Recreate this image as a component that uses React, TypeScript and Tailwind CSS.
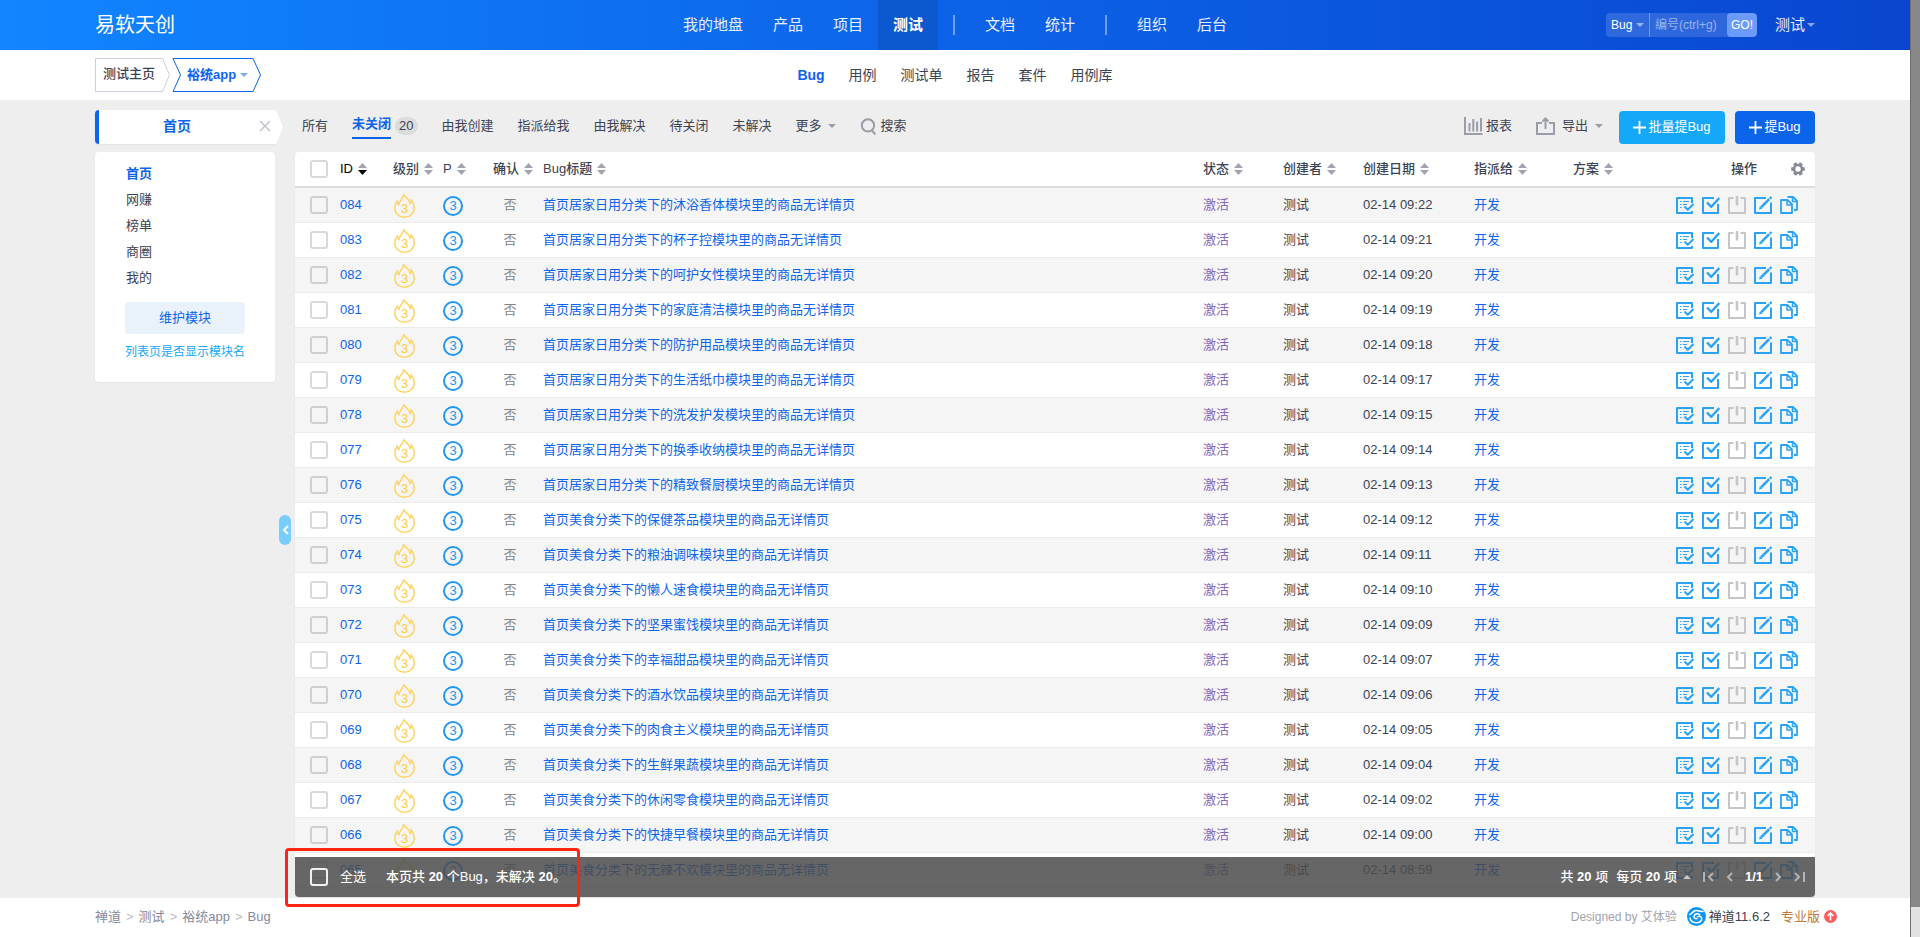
import type {ReactNode} from 'react';

const FONT = 'font-["Liberation_Sans","Noto_Sans_CJK_SC",sans-serif]';

const mainNav = [['我的地盘', '产品', '项目', '测试'], ['文档', '统计'], ['组织', '后台']];
const subNav = ['Bug', '用例', '测试单', '报告', '套件', '用例库'];
const modules = ['首页', '网赚', '榜单', '商圈', '我的'];
const filters = ['由我创建', '指派给我', '由我解决', '待关闭', '未解决'];

const bugs = [
    {id: '084', name: '居家日用分类下的沐浴香体', time: '09:22'},
    {id: '083', name: '居家日用分类下的杯子控', time: '09:21'},
    {id: '082', name: '居家日用分类下的呵护女性', time: '09:20'},
    {id: '081', name: '居家日用分类下的家庭清洁', time: '09:19'},
    {id: '080', name: '居家日用分类下的防护用品', time: '09:18'},
    {id: '079', name: '居家日用分类下的生活纸巾', time: '09:17'},
    {id: '078', name: '居家日用分类下的洗发护发', time: '09:15'},
    {id: '077', name: '居家日用分类下的换季收纳', time: '09:14'},
    {id: '076', name: '居家日用分类下的精致餐厨', time: '09:13'},
    {id: '075', name: '美食分类下的保健茶品', time: '09:12'},
    {id: '074', name: '美食分类下的粮油调味', time: '09:11'},
    {id: '073', name: '美食分类下的懒人速食', time: '09:10'},
    {id: '072', name: '美食分类下的坚果蜜饯', time: '09:09'},
    {id: '071', name: '美食分类下的幸福甜品', time: '09:07'},
    {id: '070', name: '美食分类下的酒水饮品', time: '09:06'},
    {id: '069', name: '美食分类下的肉食主义', time: '09:05'},
    {id: '068', name: '美食分类下的生鲜果蔬', time: '09:04'},
    {id: '067', name: '美食分类下的休闲零食', time: '09:02'},
    {id: '066', name: '美食分类下的快捷早餐', time: '09:00'},
    {id: '065', name: '美食分类下的无辣不欢', time: '08:59'},
];

function Caret({className = 'text-[#9a9ca8]', up = false}: {className?: string; up?: boolean}) {
    return (
        <svg className={`h-1 w-2 shrink-0 ${className}`} viewBox="0 0 8 4" fill="currentColor" aria-hidden="true">
            <path d={up ? 'M0 4 4 0l4 4z' : 'M0 0h8L4 4z'}/>
        </svg>
    );
}

function SortIcon({active = false}: {active?: boolean}) {
    return (
        <svg className="h-3 w-[9px] shrink-0" viewBox="0 0 9 12" aria-hidden="true">
            <path d="M0 5 4.5 0 9 5z" fill="#a1a3ae"/>
            <path d="M0 7h9l-4.5 5z" fill={active ? '#000' : '#a1a3ae'}/>
        </svg>
    );
}

function Checkbox({label, className = 'border-black/15'}: {label: string; className?: string}) {
    return (
        <input
            type="checkbox"
            aria-label={label}
            className={`size-[18px] shrink-0 appearance-none rounded-[3px] border-2 ${className}`}
        />
    );
}

function Flame() {
    return (
        <svg className="col-start-1 row-start-1 h-6 w-[21px]" viewBox="0 0 21 24" fill="none" stroke="#ffd35c" strokeWidth="1.400" aria-hidden="true">
            <path d="M9.6.8C9.6 4 5.4 6.400 4.900 10.600 4 10 3.400 8.800 3.400 7 1.500 9 .8 11.500.8 14c0 5.500 4.300 9.300 9.700 9.300s9.700-3.800 9.700-9.300c0-3-1-5.600-2.900-8 0 1.400-.2 2.500-1.100 3.600C15.700 5.400 12.300 4 9.600.8z"/>
        </svg>
    );
}

function ActionIcon({children, label, disabled = false}: {children: ReactNode; label: string; disabled?: boolean}) {
    return (
        <button type="button" aria-label={label} disabled={disabled} className={disabled ? 'text-[#c6c6c6]' : 'text-[#2aa3f7]'}>
            <svg className="size-[18px]" viewBox="0 0 18 18" fill="none" stroke="currentColor" strokeWidth="2" strokeLinejoin="round" aria-hidden="true">
                {children}
            </svg>
        </button>
    );
}

function RowActions() {
    return (
        <div className="flex items-center justify-end gap-2 pr-[17px]">
            <ActionIcon label="确认">
                <path d="M16 7V2H1v15h15v-2"/>
                <path d="M4 5.500h1.500M7 5.500h6M4 8.500h1.500M7 8.500h4M4 11.500h1.500" strokeWidth="1.200"/>
                <path d="m8.500 10.500 3.200 3.200 5.800-5.700" strokeWidth="2"/>
            </ActionIcon>
            <ActionIcon label="解决">
                <path d="M12 2H1v15h15V8"/>
                <path d="m5 6.500 4.300 4.300L17.300 2" strokeWidth="2.400"/>
            </ActionIcon>
            <ActionIcon label="关闭" disabled>
                <path d="M5.500 2H1v15h16V2h-4.500"/>
                <path d="M9 0v9.500" strokeWidth="2.600"/>
            </ActionIcon>
            <ActionIcon label="编辑">
                <path d="M12 2H1v15h16V6.500"/>
                <path d="m7.300 11.200 7.900-8" strokeWidth="2.600"/>
                <path d="m15.800 2.700 1.700-1.700" strokeWidth="2.400"/>
                <path d="M5 13.500 6 10l2.500 2.500z" fill="currentColor" stroke="none"/>
            </ActionIcon>
            <ActionIcon label="复制">
                <path d="M1 4h6.500L12 8.500V17H1z" strokeWidth="1.800"/>
                <path d="M7 4.500V9h4.500" strokeWidth="1.500"/>
                <path d="M7.500 1H13l4 4v9h-3" strokeWidth="1.800"/>
                <path d="M12.500 1.500v4H17" strokeWidth="1.500"/>
            </ActionIcon>
        </div>
    );
}

function Header() {
    return (
        <header className="grid h-[50px] grid-cols-[1fr_auto_1fr] items-center bg-linear-to-r from-[#1285ff] via-[#0d63e8] to-[#0a46d0] px-[95px] text-[15px] text-white">
            <h1 className="text-xl">易软天创</h1>
            <nav className="flex h-full items-center">
                {mainNav.map((group, index) => (
                    <div key={group[0]} className="flex h-full items-center">
                        {index > 0 && <span className="mx-[15px] h-5 w-0.5 bg-white/40"/>}
                        {group.map((item) => (
                            <a
                                key={item}
                                href="#"
                                className={`flex h-full items-center px-[15px] ${item === '测试' ? 'bg-[#0c59cf] font-bold' : 'text-white/90'}`}
                            >
                                {item}
                            </a>
                        ))}
                    </div>
                ))}
            </nav>
            <div className="flex items-center justify-end">
                <form className="flex h-6 overflow-hidden rounded-sm bg-white/15 text-xs">
                    <button type="button" className="flex w-11 items-center justify-between border-r border-white/30 px-[5px] font-medium">
                        Bug
                        <Caret className="text-white/50"/>
                    </button>
                    <input
                        aria-label="编号"
                        placeholder="编号(ctrl+g)"
                        className="w-[77px] bg-transparent px-[5px] placeholder:text-white/50"
                    />
                    <button type="button" className="w-[30px] rounded-sm bg-[#6b9bff]">GO!</button>
                </form>
                <a href="#" className="ml-[18px] flex items-center gap-0.5 text-white/90">
                    测试
                    <Caret className="text-white/50"/>
                </a>
            </div>
        </header>
    );
}

function SubHeader() {
    return (
        <div className="grid h-[50px] grid-cols-[1fr_auto_1fr] items-center bg-white px-[95px]">
            <div className="flex text-[13px] font-medium">
                <a href="#" className="relative h-[34px] w-[75px] pl-2 leading-[32px]">
                    <svg className="absolute inset-0 h-full w-full" viewBox="0 0 75 34" fill="none" stroke="#cbcfdc" aria-hidden="true">
                        <path d="M67.500.5H.5v33h67L74.500 17z"/>
                    </svg>
                    <span className="relative">测试主页</span>
                </a>
                <a href="#" className="relative ml-0.5 flex h-[34px] w-[89px] items-center gap-1 pl-[15px] font-bold text-[#0c64eb]">
                    <svg className="absolute inset-0 h-full w-full" viewBox="0 0 89 34" fill="none" stroke="currentColor" aria-hidden="true">
                        <path d="M1 .5h80L88.500 17 81 33.500H1L8.500 17z"/>
                    </svg>
                    <span className="relative">裕统app</span>
                    <Caret className="text-[#7eaaf5]"/>
                </a>
            </div>
            <nav className="flex text-sm">
                {subNav.map((item) => (
                    <a key={item} href="#" className={`px-3 ${item === 'Bug' ? 'font-bold text-[#0c64eb]' : ''}`}>{item}</a>
                ))}
            </nav>
        </div>
    );
}

function Sidebar() {
    return (
        <aside className="relative w-[200px] shrink-0 pr-5">
            <div className="relative flex h-[34px] items-center justify-center rounded-l border-l-4 border-[#0c64eb] bg-white pr-5 pb-0.5 text-sm font-bold text-[#0c64eb] shadow-xs">
                首页
                <button type="button" aria-label="关闭" className="absolute right-0 p-1 text-[#c4c5cc]">
                    <svg className="size-3" viewBox="0 0 12 12" stroke="currentColor" strokeWidth="1.500" aria-hidden="true">
                        <path d="m1 1 10 10M11 1 1 11"/>
                    </svg>
                </button>
                <svg className="absolute top-0 left-full h-[34px] w-2" viewBox="0 0 8 34" fill="#fff" aria-hidden="true">
                    <path d="M0 0h1l7 17-7 17H0z"/>
                </svg>
            </div>
            <div className="mt-2 rounded bg-white px-[30px] pt-[9px] pb-5 text-[13px] shadow-xs">
                <ul className="pl-px leading-[26px]">
                    {modules.map((item) => (
                        <li key={item}>
                            <a href="#" className={item === '首页' ? 'font-bold text-[#0c64eb]' : ''}>{item}</a>
                        </li>
                    ))}
                </ul>
                <button type="button" className="mt-[11px] h-8 w-full rounded bg-[#e9f2fb] text-[#0c64eb]">维护模块</button>
                <a href="#" className="mt-2 block text-center text-xs leading-5 whitespace-nowrap text-[#16a8f8]">列表页是否显示模块名</a>
            </div>
            <button type="button" aria-label="收起" className="absolute top-[405px] right-1 grid h-[30px] w-3 place-items-center rounded-full bg-[#79cdfb] text-white">
                <svg className="h-2.5 w-[7px]" viewBox="0 0 7 10" fill="none" stroke="currentColor" strokeWidth="2" aria-hidden="true">
                    <path d="M6 1 2 5l4 4"/>
                </svg>
            </button>
        </aside>
    );
}

function Toolbar() {
    return (
        <div className="-ml-[5px] flex h-[34px] items-center text-[13px]">
            <div className="flex h-full items-center pb-0.5">
                <a href="#" className="px-3">所有</a>
                <a href="#" className="flex items-center gap-1 px-3 font-bold text-[#0c64eb]">
                    <span className="border-b-2 border-[#0c64eb] pb-0.5 leading-[22px]">未关闭</span>
                    <span className="rounded-full bg-[#dddddd] px-1 text-[13px] leading-[18px] font-normal text-[#3c4353]">20</span>
                </a>
                {filters.map((item) => (
                    <a key={item} href="#" className="px-3">{item}</a>
                ))}
                <button type="button" className="flex items-center gap-1.5 px-3">
                    更多
                    <Caret/>
                </button>
                <button type="button" className="flex items-center gap-1 px-3">
                    <svg className="size-[17px]" viewBox="0 0 16 16" fill="none" stroke="#9a9ca8" strokeWidth="1.900" aria-hidden="true">
                        <circle cx="7.500" cy="7" r="5.800"/>
                        <path d="m11 11.500 3.500 4"/>
                    </svg>
                    搜索
                </button>
            </div>
            <div className="ml-auto flex items-center">
                <div className="flex items-center pb-0.5">
                    <button type="button" className="flex items-center gap-[3px] px-3">
                        <svg className="h-[18px] w-[19px]" viewBox="0 0 19 18" fill="none" stroke="#9a9ca8" strokeWidth="2" aria-hidden="true">
                            <path d="M1 0v17h17.500M5.500 6v8.500M9.300 2v12.500M13.100 4.500v10M17 1v13.500"/>
                        </svg>
                        报表
                    </button>
                    <button type="button" className="flex items-center gap-[7px] px-3">
                        <svg className="h-[18px] w-[19px]" viewBox="0 0 19 18" fill="none" stroke="#9a9ca8" strokeWidth="2" aria-hidden="true">
                            <path d="M6 6H1v11h17V6h-5M9.500 12V2M6.500 4.500l3-3 3 3"/>
                        </svg>
                        导出
                        <Caret/>
                    </button>
                </div>
                <button type="button" className="ml-1 flex h-[33px] w-[106px] items-center justify-center gap-0.5 rounded bg-[#16a8f8] text-white">
                    <Plus/>
                    批量提Bug
                </button>
                <button type="button" className="ml-2.5 flex h-[33px] w-20 items-center justify-center gap-0.5 rounded bg-[#0c64eb] text-white">
                    <Plus/>
                    提Bug
                </button>
            </div>
        </div>
    );
}

function Plus() {
    return (
        <svg className="size-[13px]" viewBox="0 0 13 13" stroke="currentColor" strokeWidth="1.800" aria-hidden="true">
            <path d="M6.500 0v13M0 6.500h13"/>
        </svg>
    );
}

function HeadCell({children, className = 'pl-2', active = false}: {children: ReactNode; className?: string; active?: boolean}) {
    return (
        <th className={`text-left font-medium ${active ? 'text-black' : ''} ${className}`}>
            <div className="flex items-center gap-[5px]">
                {children}
                <SortIcon active={active}/>
            </div>
        </th>
    );
}

function BugTable() {
    return (
        <table className="w-full table-fixed border-collapse whitespace-nowrap">
            <colgroup>
                <col className="w-[90px]"/>
                <col className="w-[50px]"/>
                <col className="w-[50px]"/>
                <col className="w-[50px]"/>
                <col/>
                <col className="w-20"/>
                <col className="w-20"/>
                <col className="w-[111px]"/>
                <col className="w-[99px]"/>
                <col className="w-[108px]"/>
                <col className="w-[142px]"/>
            </colgroup>
            <thead>
                <tr className="h-[35px] border-b-2 border-[#dddddd]">
                    <HeadCell className="pl-[15px]" active>
                        <Checkbox label="全选"/>
                        <span className="pl-[7px]">ID</span>
                    </HeadCell>
                    <HeadCell>级别</HeadCell>
                    <HeadCell>P</HeadCell>
                    <HeadCell>确认</HeadCell>
                    <HeadCell>Bug标题</HeadCell>
                    <HeadCell>状态</HeadCell>
                    <HeadCell>创建者</HeadCell>
                    <HeadCell>创建日期</HeadCell>
                    <HeadCell>指派给</HeadCell>
                    <HeadCell>方案</HeadCell>
                    <th className="font-medium">
                        <div className="grid grid-cols-[1fr_auto_1fr] items-center">
                            <span className="col-start-2">操作</span>
                            <button type="button" aria-label="设置" className="mr-2.5 justify-self-end text-[#858895]">
                                <svg className="size-3.5" viewBox="0 0 14 14" fill="none" stroke="currentColor" aria-hidden="true">
                                    <circle cx="7" cy="7" r="4" strokeWidth="2.600"/>
                                    <path d="M11.800 7h2M2.200 7h-2M9.400 11.200l.9 1.600M4.600 2.800l-.9-1.600M4.600 11.200l-.9 1.600M9.400 2.800l.9-1.600" strokeWidth="3.600"/>
                                </svg>
                            </button>
                        </div>
                    </th>
                </tr>
            </thead>
            <tbody>
                {bugs.map((bug) => (
                    <tr key={bug.id} className="h-[35px] border-b border-[#ebebeb] odd:bg-[#f5f5f5]">
                        <td className="pl-[15px]">
                            <div className="flex items-center gap-3">
                                <Checkbox label={bug.id}/>
                                <a href="#" className="text-[#0c64eb]">{bug.id}</a>
                            </div>
                        </td>
                        <td className="pt-0.5 pl-[9px]">
                            <span className="grid w-[21px] place-items-center text-[13px] text-[#ffcb3d]">
                                <Flame/>
                                <span className="col-start-1 row-start-1 pt-1.5">3</span>
                            </span>
                        </td>
                        <td className="pt-0.5 pl-2">
                            <span className="grid size-5 place-items-center rounded-full border-2 border-[#2196f3] leading-none text-[#2196f3]">3</span>
                        </td>
                        <td className="text-center text-[#838383]">否</td>
                        <td className="pl-2"><a href="#" className="text-[#0c64eb]">首页{bug.name}模块里的商品无详情页</a></td>
                        <td className="pl-2 text-[#8666b8]">激活</td>
                        <td className="pl-2">测试</td>
                        <td className="pl-2">02-14 {bug.time}</td>
                        <td className="pl-2"><a href="#" className="text-[#0c64eb]">开发</a></td>
                        <td/>
                        <td><RowActions/></td>
                    </tr>
                ))}
            </tbody>
        </table>
    );
}

function PageArrow({d, label, short = false}: {d: string; label: string; short?: boolean}) {
    return (
        <button type="button" aria-label={label} className="text-[#b4b4b4]">
            <svg
                className={short ? 'h-2.5 w-[7px]' : 'h-2.5 w-[11px]'}
                viewBox={short ? '0 0 7 10' : '0 0 11 10'}
                fill="none"
                stroke="currentColor"
                strokeWidth="2"
                aria-hidden="true"
            >
                <path d={d}/>
            </svg>
        </button>
    );
}

function TableFooter() {
    return (
        <div className="absolute inset-x-0 bottom-0 flex h-10 items-center rounded-b bg-[#4b4b4b]/85 pr-2.5 pl-[15px] text-white">
            <Checkbox label="全选" className="border-white/90"/>
            <button type="button" className="ml-3">全选</button>
            <p className="ml-5 font-medium">本页共 <b>20</b> 个Bug，未解决 <b>20</b>。</p>
            <div className="ml-auto flex items-center gap-3 font-medium">
                <span className="-mr-1">共 <b>20</b> 项</span>
                <button type="button" className="flex items-center gap-1.5">
                    <span>每页 <b>20</b> 项</span>
                    <Caret className="text-[#c9c9c9]" up/>
                </button>
                <PageArrow label="第一页" d="M1 0v10M10 1 6 5l4 4"/>
                <PageArrow label="上一页" d="M6 1 2 5l4 4" short/>
                <b>1/1</b>
                <PageArrow label="下一页" d="m1 1 4 4-4 4" short/>
                <PageArrow label="最后一页" d="m1 1 4 4-4 4M10 0v10"/>
            </div>
        </div>
    );
}

function Footer() {
    return (
        <footer className="flex h-[39px] items-center justify-between bg-white pr-[73px] pb-px pl-[95px] text-[13px]">
            <nav className="flex gap-[5px] text-[#838a9d]">
                <a href="#">禅道</a>
                <span className="text-[#b9bcc6]">&gt;</span>
                <a href="#">测试</a>
                <span className="text-[#b9bcc6]">&gt;</span>
                <a href="#">裕统app</a>
                <span className="text-[#b9bcc6]">&gt;</span>
                <span>Bug</span>
            </nav>
            <div className="flex items-center">
                <span className="text-xs text-[#a1a3ae]">Designed by 艾体验</span>
                <a href="#" className="ml-2.5 flex items-center gap-[3px]">
                    <svg className="size-[19px]" viewBox="0 0 19 19" fill="none" aria-hidden="true">
                        <circle cx="9.500" cy="9.500" r="9.500" fill="#0a95f5"/>
                        <path d="M2 7.500c2.500.5 3-3 6-3.800 3.200-.8 5.300 1.500 8.500.6M13.200 8c-1.600-2-5.700-1.500-6.200 1.300-.3 2 2 3 3.500 1.800M3 10.500c.3 3.300 3 5.200 6.300 5.200 3.500 0 6.200-2 5.200-5-.7-1.700-3-2-4.200-.7" stroke="#fff" strokeWidth="1.600"/>
                    </svg>
                    禅道11.6.2
                </a>
                <a href="#" className="ml-[11px] flex items-center gap-1 text-[#c07a3e]">
                    专业版
                    <svg className="size-[13px]" viewBox="0 0 13 13" fill="none" aria-hidden="true">
                        <circle cx="6.500" cy="6.500" r="6.500" fill="#ff5d5d"/>
                        <path d="M6.500 10.500V3.500M3.500 6l3-3 3 3" stroke="#fff" strokeWidth="1.600"/>
                    </svg>
                </a>
            </div>
        </footer>
    );
}

export default function App() {
    return (
        <div className={`flex ${FONT} text-[13px] text-[#3c4353]`}>
            <div className="min-w-0 flex-1">
                <Header/>
                <SubHeader/>
                <main className="flex bg-[#eeeeee] px-[95px] pt-2.5 pb-px">
                    <Sidebar/>
                    <div className="min-w-0 flex-1">
                        <Toolbar/>
                        <div className="relative mt-2 rounded bg-white pb-[9px] shadow-xs">
                            <BugTable/>
                            <TableFooter/>
                            <div className="pointer-events-none absolute -bottom-2.5 -left-2.5 h-[59px] w-[295px] rounded border-3 border-[#ff2412]"/>
                        </div>
                    </div>
                </main>
                <Footer/>
            </div>
            <div className="w-2.5 shrink-0 border-l border-[#6e6e6e] bg-[#e2e2e2]">
                <div className="h-[907px] bg-[#888888]"/>
            </div>
        </div>
    );
}
